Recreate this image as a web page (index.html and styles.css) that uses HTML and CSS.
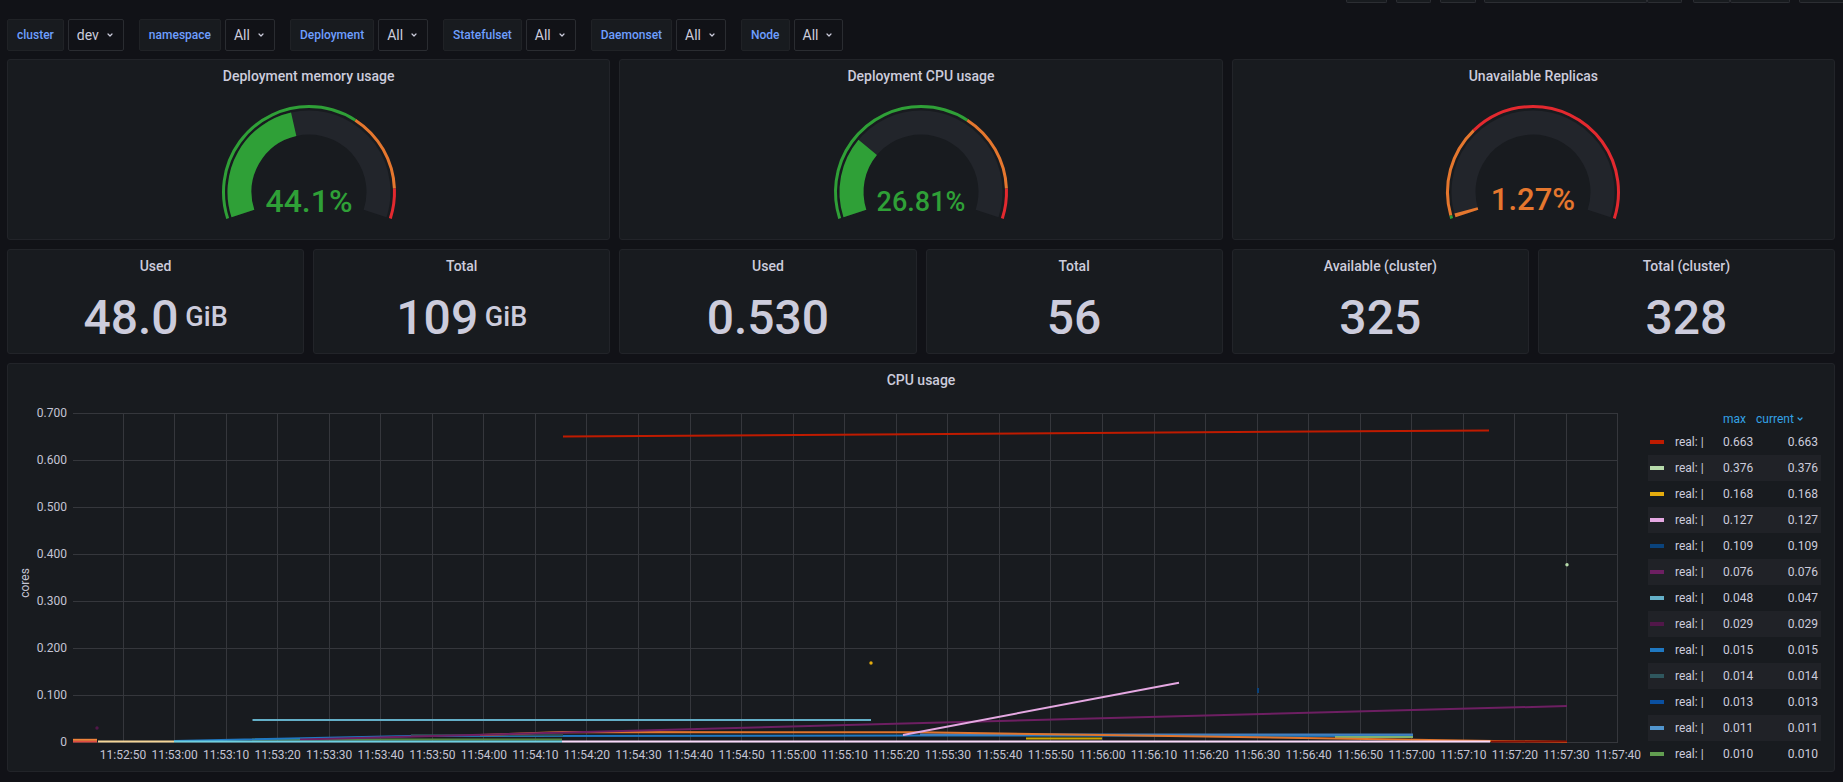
FILE: index.html
```html
<!DOCTYPE html>
<html>
<head>
<meta charset="utf-8">
<title>Kubernetes dashboard</title>
<link rel="stylesheet" href="styles.css">
</head>
<body>
<div class="toolbar">
  <span class="tb tb1"></span>
  <span class="tb tb2"></span>
  <span class="tb tb3"></span>
  <span class="tb tb4a"></span><span class="tb tb4b"></span>
  <span class="tb tb5a"></span><span class="tb tb5b"></span>
  <span class="tb tb6"></span>
</div>

<div class="filters">
  <div class="fgroup"><span class="flabel">cluster</span><span class="fselect">dev<svg class="chev" viewBox="0 0 10 10" width="10" height="10"><path d="M3 4 L5 6 L7 4"/></svg></span></div>
  <div class="fgroup"><span class="flabel">namespace</span><span class="fselect">All<svg class="chev" viewBox="0 0 10 10" width="10" height="10"><path d="M3 4 L5 6 L7 4"/></svg></span></div>
  <div class="fgroup"><span class="flabel">Deployment</span><span class="fselect">All<svg class="chev" viewBox="0 0 10 10" width="10" height="10"><path d="M3 4 L5 6 L7 4"/></svg></span></div>
  <div class="fgroup"><span class="flabel">Statefulset</span><span class="fselect">All<svg class="chev" viewBox="0 0 10 10" width="10" height="10"><path d="M3 4 L5 6 L7 4"/></svg></span></div>
  <div class="fgroup"><span class="flabel">Daemonset</span><span class="fselect">All<svg class="chev" viewBox="0 0 10 10" width="10" height="10"><path d="M3 4 L5 6 L7 4"/></svg></span></div>
  <div class="fgroup"><span class="flabel">Node</span><span class="fselect">All<svg class="chev" viewBox="0 0 10 10" width="10" height="10"><path d="M3 4 L5 6 L7 4"/></svg></span></div>
</div>

<div class="row gauges">
  <div class="panel">
    <div class="ptitle">Deployment memory usage</div>
    <svg class="gauge" viewBox="0 0 200 132" width="200" height="132">
      <path class="ring green" d="M18.68 126.42 A85.5 85.5 0 1 1 181.32 126.42" pathLength="100" stroke-dasharray="65.2 100"/>
      <path class="ring orange" d="M18.68 126.42 A85.5 85.5 0 1 1 181.32 126.42" pathLength="100" stroke-dasharray="0 65.2 25.4 100"/>
      <path class="ring red" d="M18.68 126.42 A85.5 85.5 0 1 1 181.32 126.42" pathLength="100" stroke-dasharray="0 90.6 9.4 100"/>
      <path class="track" d="M33.90 121.48 A69.5 69.5 0 1 1 166.10 121.48"/>
      <path class="band green" d="M33.90 121.48 A69.5 69.5 0 1 1 166.10 121.48" pathLength="100" stroke-dasharray="44.1 100"/>
      <text class="gval gv-green gv-32" x="100" y="120">44.1%</text>
    </svg>
  </div>
  <div class="panel">
    <div class="ptitle">Deployment CPU usage</div>
    <svg class="gauge" viewBox="0 0 200 132" width="200" height="132">
      <path class="ring green" d="M18.68 126.42 A85.5 85.5 0 1 1 181.32 126.42" pathLength="100" stroke-dasharray="65.2 100"/>
      <path class="ring orange" d="M18.68 126.42 A85.5 85.5 0 1 1 181.32 126.42" pathLength="100" stroke-dasharray="0 65.2 25.4 100"/>
      <path class="ring red" d="M18.68 126.42 A85.5 85.5 0 1 1 181.32 126.42" pathLength="100" stroke-dasharray="0 90.6 9.4 100"/>
      <path class="track" d="M33.90 121.48 A69.5 69.5 0 1 1 166.10 121.48"/>
      <path class="band green" d="M33.90 121.48 A69.5 69.5 0 1 1 166.10 121.48" pathLength="100" stroke-dasharray="26.81 100"/>
      <text class="gval gv-green gv-27" x="100" y="119">26.81%</text>
    </svg>
  </div>
  <div class="panel">
    <div class="ptitle">Unavailable Replicas</div>
    <svg class="gauge" viewBox="0 0 200 132" width="200" height="132">
      <path class="ring green" d="M18.68 126.42 A85.5 85.5 0 1 1 181.32 126.42" pathLength="100" stroke-dasharray="1 100"/>
      <path class="ring orange" d="M18.68 126.42 A85.5 85.5 0 1 1 181.32 126.42" pathLength="100" stroke-dasharray="0 1 28.7 100"/>
      <path class="ring red" d="M18.68 126.42 A85.5 85.5 0 1 1 181.32 126.42" pathLength="100" stroke-dasharray="0 29.7 70.3 100"/>
      <path class="track" d="M33.90 121.48 A69.5 69.5 0 1 1 166.10 121.48"/>
      <path class="band orange" d="M33.90 121.48 A69.5 69.5 0 1 1 166.10 121.48" pathLength="100" stroke-dasharray="1.27 100"/>
      <text class="gval gv-orange gv-31" x="100" y="118">1.27%</text>
    </svg>
  </div>
</div>

<div class="row stats">
  <div class="panel"><div class="ptitle">Used</div><div class="svalue">48.0<span class="unit"> GiB</span></div></div>
  <div class="panel"><div class="ptitle">Total</div><div class="svalue">109<span class="unit"> GiB</span></div></div>
  <div class="panel"><div class="ptitle">Used</div><div class="svalue">0.530</div></div>
  <div class="panel"><div class="ptitle">Total</div><div class="svalue">56</div></div>
  <div class="panel"><div class="ptitle">Available (cluster)</div><div class="svalue">325</div></div>
  <div class="panel"><div class="ptitle">Total (cluster)</div><div class="svalue">328</div></div>
</div>

<div class="row graphs">
  <div class="panel graph-panel">
    <div class="ptitle">CPU usage</div>
    <div class="graph-body">
      <svg class="chart" viewBox="0 0 1632 372" width="1632" height="372">
        <g class="grid" shape-rendering="crispEdges">
          <path d="M57 17H1602M57 64H1602M57 111H1602M57 158H1602M57 205H1602M57 252H1602M57 299H1602M57 346H1602"/>
          <path d="M107 17V346M158.55 17V346M210.1 17V346M261.65 17V346M313.2 17V346M364.75 17V346M416.3 17V346M467.85 17V346M519.4 17V346M570.95 17V346M622.5 17V346M674.05 17V346M725.6 17V346M777.15 17V346M828.7 17V346M880.25 17V346M931.8 17V346M983.35 17V346M1034.9 17V346M1086.45 17V346M1138 17V346M1189.55 17V346M1241.1 17V346M1292.65 17V346M1344.2 17V346M1395.75 17V346M1447.3 17V346M1498.85 17V346M1550.4 17V346M1601.95 17V346"/>
        </g>
        <g class="axis yaxis">
          <text x="51" y="21">0.700</text>
          <text x="51" y="68">0.600</text>
          <text x="51" y="115">0.500</text>
          <text x="51" y="162">0.400</text>
          <text x="51" y="209">0.300</text>
          <text x="51" y="256">0.200</text>
          <text x="51" y="303">0.100</text>
          <text x="51" y="350">0</text>
        </g>
        <text class="axis ylabel" transform="translate(13 187) rotate(-90)">cores</text>
        <g class="axis xaxis">
          <text x="107" y="363">11:52:50</text>
          <text x="158.55" y="363">11:53:00</text>
          <text x="210.1" y="363">11:53:10</text>
          <text x="261.65" y="363">11:53:20</text>
          <text x="313.2" y="363">11:53:30</text>
          <text x="364.75" y="363">11:53:40</text>
          <text x="416.3" y="363">11:53:50</text>
          <text x="467.85" y="363">11:54:00</text>
          <text x="519.4" y="363">11:54:10</text>
          <text x="570.95" y="363">11:54:20</text>
          <text x="622.5" y="363">11:54:30</text>
          <text x="674.05" y="363">11:54:40</text>
          <text x="725.6" y="363">11:54:50</text>
          <text x="777.15" y="363">11:55:00</text>
          <text x="828.7" y="363">11:55:10</text>
          <text x="880.25" y="363">11:55:20</text>
          <text x="931.8" y="363">11:55:30</text>
          <text x="983.35" y="363">11:55:40</text>
          <text x="1034.9" y="363">11:55:50</text>
          <text x="1086.45" y="363">11:56:00</text>
          <text x="1138" y="363">11:56:10</text>
          <text x="1189.55" y="363">11:56:20</text>
          <text x="1241.1" y="363">11:56:30</text>
          <text x="1292.65" y="363">11:56:40</text>
          <text x="1344.2" y="363">11:56:50</text>
          <text x="1395.75" y="363">11:57:00</text>
          <text x="1447.3" y="363">11:57:10</text>
          <text x="1498.85" y="363">11:57:20</text>
          <text x="1550.4" y="363">11:57:30</text>
          <text x="1601.95" y="363">11:57:40</text>
        </g>
        <g class="series">
          <path stroke="#508642" d="M236 343.5H546"/>
          <path stroke="#1F78C1" d="M158 345L395 340L904 339.5L1397 340"/>
          <path stroke="#2F575E" d="M395 339.3H547"/>
          <path stroke="#447EBC" d="M904 338.5H1397"/>
          <path stroke="#7EB26D" d="M1319 341H1397"/>
          <path stroke="#CCA300" d="M1010 342.5H1086"/>
          <path stroke="#E0752D" d="M464 339L547 336L904 336.3L1551 346"/>
          <path stroke="#6D1F62" d="M284 343.5L1551 310"/>
          <path stroke="#64B0C8" d="M236.5 324H855"/>
          <path stroke="#E5A8E2" d="M887 339L1163 286.7"/>
          <path stroke="#BF1B00" d="M547 40.5L1473 34.4"/>
          <path stroke="#F4D598" stroke-width="3" d="M82 345.5H158"/>
          <path stroke="#6ED0E0" stroke-width="3" d="M158 345.5H546"/>
          <path stroke="#F9D9F9" d="M546 345.5H1474"/>
          <path stroke="#890F02" stroke-width="3" d="M1475 345.5H1551"/>
          <path stroke="#E24D42" d="M57 345.5H81"/>
          <path stroke="#EF843C" d="M57 343.8H81"/>
          <circle cx="1551" cy="168.7" r="1.7" fill="#B7DBAB"/>
          <circle cx="855" cy="267" r="1.7" fill="#E5AC0E"/>
          <rect x="1241" y="292" width="2" height="5" fill="#0A437C"/>
          <circle cx="81" cy="332" r="1.7" fill="#511749"/>
        </g>
      </svg>
      <div class="legend">
        <div class="lhead"><span></span><span></span><span class="lh">max</span><span class="lh lh-cur">current<svg class="chev chev-blue" viewBox="0 0 10 10" width="10" height="10"><path d="M3 4 L5 6 L7 4"/></svg></span></div>
        <div class="lrow"><span><i class="sw c1"></i></span><span>real: |</span><span>0.663</span><span class="cur">0.663</span></div>
        <div class="lrow alt"><span><i class="sw c2"></i></span><span>real: |</span><span>0.376</span><span class="cur">0.376</span></div>
        <div class="lrow"><span><i class="sw c3"></i></span><span>real: |</span><span>0.168</span><span class="cur">0.168</span></div>
        <div class="lrow alt"><span><i class="sw c4"></i></span><span>real: |</span><span>0.127</span><span class="cur">0.127</span></div>
        <div class="lrow"><span><i class="sw c5"></i></span><span>real: |</span><span>0.109</span><span class="cur">0.109</span></div>
        <div class="lrow alt"><span><i class="sw c6"></i></span><span>real: |</span><span>0.076</span><span class="cur">0.076</span></div>
        <div class="lrow"><span><i class="sw c7"></i></span><span>real: |</span><span>0.048</span><span class="cur">0.047</span></div>
        <div class="lrow alt"><span><i class="sw c8"></i></span><span>real: |</span><span>0.029</span><span class="cur">0.029</span></div>
        <div class="lrow"><span><i class="sw c9"></i></span><span>real: |</span><span>0.015</span><span class="cur">0.015</span></div>
        <div class="lrow alt"><span><i class="sw c10"></i></span><span>real: |</span><span>0.014</span><span class="cur">0.014</span></div>
        <div class="lrow"><span><i class="sw c11"></i></span><span>real: |</span><span>0.013</span><span class="cur">0.013</span></div>
        <div class="lrow alt"><span><i class="sw c12"></i></span><span>real: |</span><span>0.011</span><span class="cur">0.011</span></div>
        <div class="lrow"><span><i class="sw c13"></i></span><span>real: |</span><span>0.010</span><span class="cur">0.010</span></div>
      </div>
    </div>
  </div>
</div>
</body>
</html>
```

FILE: styles.css
```css
html, body {
  margin: 0;
  padding: 0;
}
body {
  width: 1843px;
  height: 782px;
  overflow: hidden;
  background: #111217;
  color: #ccccdc;
  font-family: Roboto, "Liberation Sans", sans-serif;
}

/* top toolbar remnants (scrolled out of view) */
.toolbar {
  display: flex;
  height: 3px;
  overflow: hidden;
  padding-left: 1346px;
}
.tb {
  flex: none;
  height: 3px;
  box-sizing: border-box;
  background: #181b1f;
  border: 1px solid #2c2e33;
  border-top: none;
  border-radius: 0 0 2px 2px;
}
.tb1 { width: 41px; margin-right: 9px; }
.tb2 { width: 35px; margin-right: 9px; }
.tb3 { width: 36px; margin-right: 8px; }
.tb4a { width: 163px; }
.tb4b { width: 35px; margin-right: 11px; }
.tb5a { width: 37px; }
.tb5b { width: 60px; margin-right: 9px; }
.tb6 { width: 52px; }

/* variable filter bar */
.filters {
  display: flex;
  gap: 15px;
  margin-top: 16px;
  padding-left: 7px;
  height: 32px;
}
.fgroup {
  display: flex;
  gap: 4px;
}
.flabel {
  display: flex;
  align-items: center;
  height: 32px;
  box-sizing: border-box;
  padding: 0 9px;
  background: #181b1f;
  border: 1px solid #202226;
  border-radius: 2px;
  color: #6e9fff;
  font-size: 12px;
  font-weight: 500;
}
.fselect {
  display: flex;
  align-items: center;
  gap: 6px;
  height: 32px;
  box-sizing: border-box;
  padding: 0 8px;
  background: #111217;
  border: 1px solid #2a2c31;
  border-radius: 2px;
  color: #ccccdc;
  font-size: 14px;
}
.chev path {
  fill: none;
  stroke: #ccccdc;
  stroke-width: 1.2;
  stroke-linecap: round;
  stroke-linejoin: round;
}
.chev-blue path {
  stroke: #33a2e5;
}

/* panel rows */
.row {
  display: flex;
  gap: 9px;
  padding: 0 8px 0 7px;
  margin-top: 9px;
}
.gauges {
  margin-top: 8px;
}
.panel {
  flex: 1 1 0;
  min-width: 0;
  display: flex;
  flex-direction: column;
  box-sizing: border-box;
  background: #181b1f;
  border: 1px solid #222429;
  border-radius: 3px;
}
.gauges .panel { height: 181px; }
.stats .panel { height: 105px; }
.graph-panel { height: 409px; }

.ptitle {
  flex: none;
  height: 32px;
  display: flex;
  align-items: center;
  justify-content: center;
  font-size: 14px;
  font-weight: 500;
  color: #ccccdc;
}

/* gauges */
.gauge {
  display: block;
  margin: 0 auto;
  flex: none;
}
.ring {
  fill: none;
  stroke-width: 3;
}
.track {
  fill: none;
  stroke: #22252b;
  stroke-width: 24;
}
.band {
  fill: none;
  stroke-width: 24;
}
.ring.green, .band.green { stroke: #2fa037; }
.ring.orange, .band.orange { stroke: #e5772e; }
.ring.red { stroke: #e3292f; }
.gval {
  font-family: Roboto, "Liberation Sans", sans-serif;
  font-weight: 500;
  text-anchor: middle;
}
.gv-green { fill: #2fa037; }
.gv-orange { fill: #e5772e; }
.gv-32 { font-size: 32px; }
.gv-31 { font-size: 31px; }
.gv-27 { font-size: 27px; }

/* stats */
.svalue {
  flex: 1;
  display: flex;
  align-items: center;
  justify-content: center;
  font-size: 48px;
  line-height: 48px;
  font-weight: 500;
  color: #ccccdc;
  white-space: pre;
}
.unit {
  font-size: 27px;
  line-height: 1;
}

/* graph */
.graph-body {
  flex: 1;
  display: flex;
  padding: 0 13px 0 8px;
}
.chart {
  display: block;
  flex: none;
}
.grid path {
  fill: none;
  stroke: #35373c;
  stroke-width: 1;
}
.axis text, text.axis {
  font-family: Roboto, "Liberation Sans", sans-serif;
  font-size: 12px;
  fill: #c4c4d4;
}
.yaxis text { text-anchor: end; }
.xaxis text { text-anchor: middle; }
.ylabel { text-anchor: middle; }
.series path {
  fill: none;
  stroke-width: 2;
}

/* legend */
.legend {
  flex: none;
  width: 173px;
  padding-top: 13px;
  font-size: 12px;
  color: #ccccdc;
}
.lhead, .lrow {
  display: grid;
  grid-template-columns: 25px 48px 33px 1fr;
  align-items: center;
  padding: 0 3px 0 2px;
}
.lhead {
  height: 20px;
}
.lh {
  color: #33a2e5;
}
.lh-cur {
  display: flex;
  align-items: center;
  gap: 1px;
}
.lrow {
  height: 26px;
}
.lrow.alt {
  background: #202227;
}
.cur {
  text-align: right;
}
.sw {
  display: block;
  width: 14px;
  height: 4px;
}
.c1 { background: #bf1b00; }
.c2 { background: #b7dbab; }
.c3 { background: #e5ac0e; }
.c4 { background: #e5a8e2; }
.c5 { background: #0a437c; }
.c6 { background: #6d1f62; }
.c7 { background: #64b0c8; }
.c8 { background: #511749; }
.c9 { background: #1f78c1; }
.c10 { background: #2f575e; }
.c11 { background: #0a50a1; }
.c12 { background: #5195ce; }
.c13 { background: #629e51; }
```
